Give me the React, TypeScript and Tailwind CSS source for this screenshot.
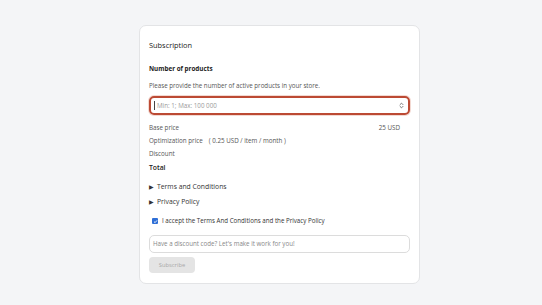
import { ChevronsUpDown } from "lucide-react";

const font = { fontFamily: '"Open Sans", "Noto Sans", sans-serif' };

const Row = ({ label, value, extra }: { label: string; value?: string; extra?: string }) => (
  <div className="flex h-[13px] items-center justify-between text-[6.25px] text-[#555]">
    <span>
      {label}
      {extra && <span className="ml-[6px]">{extra}</span>}
    </span>
    {value && <span className="mr-[10px]">{value}</span>}
  </div>
);

export default function App() {
  return (
    <div className="min-h-[305px] bg-[#f4f5f7] pt-[25px]" style={font}>
      <div className="ml-[139px] flex h-[259px] w-[281px] flex-col items-stretch rounded-[7px] border border-[#e3e4e6] bg-white px-[9px] pt-[13px]">
        <h2 className="text-[7.4px] font-medium leading-[12px] text-[#222]">Subscription</h2>

        <h3 className="mt-[13px] text-[6.3px] font-bold leading-[10px] text-[#222]">Number of products</h3>
        <p className="mt-[7px] text-[6.2px] leading-[10px] text-[#555]">
          Please provide the number of active products in your store.
        </p>

        <div className="mt-[5px] flex h-[19px] items-center rounded-[5px] border-2 border-[#bc4a34] px-[3px] shadow-[0_0_0_1px_#f3d9d2]">
          <span className="h-[9px] w-px bg-[#444]" />
          <span className="ml-[2px] flex-1 text-[6.25px] text-[#9a9a9a]">Min: 1; Max: 100 000</span>
          <ChevronsUpDown className="h-[7px] w-[7px] text-[#666]" strokeWidth={3} />
        </div>

        <div className="mt-[6px]">
          <Row label="Base price" value="25 USD" />
          <Row label="Optimization price" extra="( 0.25 USD / item / month )" />
          <Row label="Discount" />
        </div>
        <div className="mt-[1px] text-[6.8px] font-semibold leading-[13px] text-[#222]">Total</div>

        <div className="mt-[6px] flex h-[15px] items-center gap-[3px] text-[6.8px] text-[#333]">
          <span className="text-[5.5px]">▶</span>
          <span>Terms and Conditions</span>
        </div>
        <div className="flex h-[15px] items-center gap-[3px] text-[6.8px] text-[#333]">
          <span className="text-[5.5px]">▶</span>
          <span>Privacy Policy</span>
        </div>

        <label className="mt-[4px] flex h-[14px] items-center gap-[4px] pl-[3px] text-[6.2px] text-[#333]">
          <span className="flex h-[6px] w-[6px] items-center justify-center rounded-[1px] bg-[#2f6fd6]">
            <svg viewBox="0 0 10 10" className="h-[5px] w-[5px]">
              <path d="M2 5.2 4.2 7.3 8 2.8" fill="none" stroke="white" strokeWidth="1.8" />
            </svg>
          </span>
          I accept the Terms And Conditions and the Privacy Policy
        </label>

        <div className="mt-[7px] flex h-[18px] items-center rounded-[5px] border border-[#dcdcdc] px-[3px] text-[6.2px] text-[#888]">
          Have a discount code? Let's make it work for you!
        </div>

        <button
          className="mt-[4px] block h-[16px] w-[46px] rounded-[4px] bg-[#e4e4e4] text-[5.8px] text-[#a8a8a8]"
          style={font}
          disabled
        >
          Subscribe
        </button>
      </div>
    </div>
  );
}
